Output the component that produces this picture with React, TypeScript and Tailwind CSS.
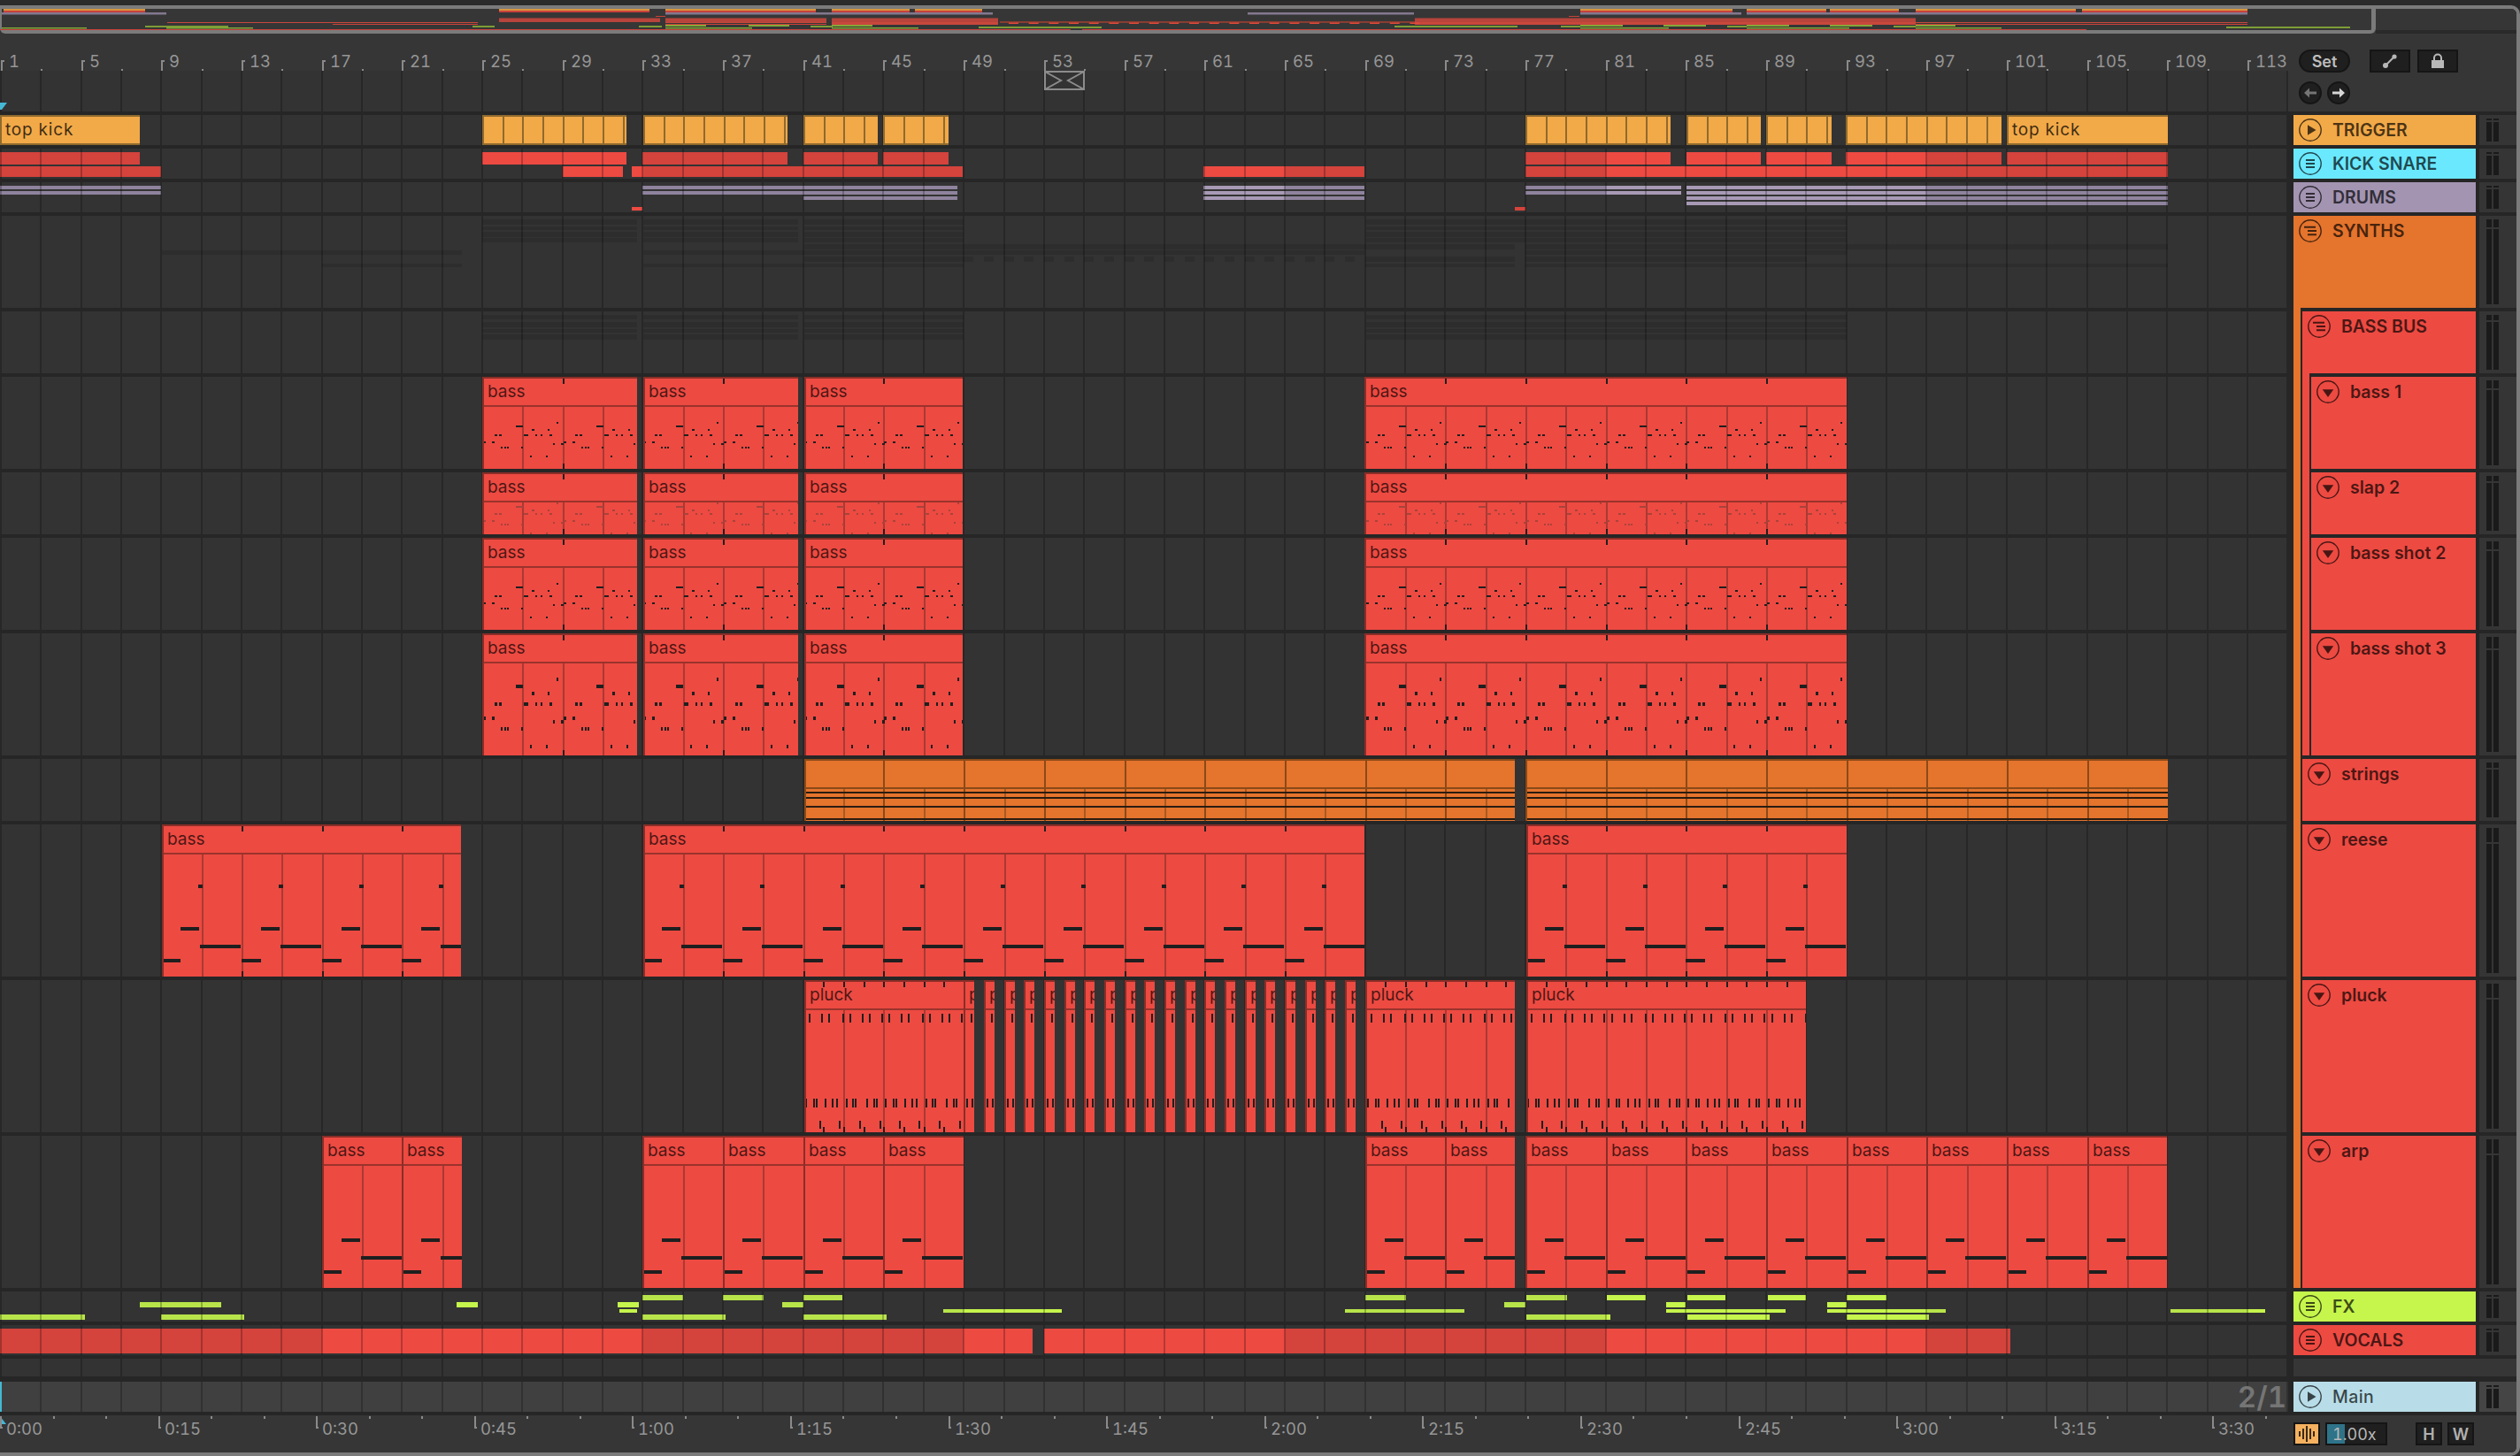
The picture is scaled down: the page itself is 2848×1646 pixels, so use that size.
import type { ReactNode } from "react";

// 一个小节 22.67px，所有片段都用画布上的像素坐标描述
const BAR = 22.67;
const barX = (bar: number) => Math.round(1 + (bar - 1) * BAR);

type Span = [number, number];

const RED = "#ed4a42";
const RED_DIM = "#d4433c";

const TRIGGER: Span[] = [
  [545, 708],
  [727, 890],
  [908, 992],
  [998, 1072],
  [1724, 1888],
  [1906, 1990],
  [1996, 2070],
  [2086, 2262],
];
const BASS: Span[] = [
  [545, 720],
  [727, 902],
  [909, 1088],
  [1542, 2087],
];
const REESE: Span[] = [
  [183, 521],
  [727, 1542],
  [1725, 2087],
];
const ARP_STARTS = [17, 21, 33, 37, 41, 45, 69, 73, 77, 81, 85, 89, 93, 97, 101, 105];
const PLUCK_SHORT = Array.from({ length: 20 }, (_, i) => 49 + i);
const SECOND_LABELS = Array.from({ length: 15 }, (_, i) => i);
const BAR_LABELS = Array.from({ length: 29 }, (_, i) => 1 + i * 4);

// bass 预览音符: [偏移, 宽度, 音高序号]，每 4 小节循环一次
const BASS_NOTES: Array<[number, number, number]> = [
  [37.5, 8, 1],
  [14, 3, 3],
  [18.5, 3, 3],
  [1, 3, 4],
  [11, 3, 4],
  [21, 2, 6],
  [24.5, 2, 6],
  [28, 2, 6],
  [43.5, 2, 6],
  [84, 2, 0],
  [56, 3, 2],
  [74, 2, 2],
  [47, 3, 3],
  [50, 2, 3],
  [60, 2, 3],
  [65.5, 2, 3],
  [76, 3, 3],
  [80, 2, 5],
  [89, 3, 5],
  [54, 2, 7],
  [72, 2, 7],
];
const PLUCK_TOP = [6, 20, 28, 44, 52, 66, 74, 88];
const PLUCK_MID = [2, 10.7, 14.3, 24, 31.7, 36.6, 48.2, 55.4, 58, 70.5, 78.6, 82];
const PLUCK_LOW = [18.3, 40.2, 62.5, 86.2];

type Rect = [number, number, number, number, string];

function overviewRects(): Rect[] {
  const rects: Rect[] = [];
  const add = (spans: Span[], y0: number, y1: number, color: string) =>
    spans.forEach(([a, b]) => rects.push([a, b, y0, y1, color]));

  const trig: Span[] = [
    [4, 164],
    [564, 734],
    [752, 922],
    [940, 1028],
    [1034, 1110],
    [1786, 1958],
    [1974, 2064],
    [2068, 2146],
    [2165, 2346],
    [2353, 2540],
  ];
  add(trig, 10, 12, "#d9953f");
  add(trig, 12, 14, "#c9423b");
  add([[2, 188], [752, 940], [940, 1122], [1410, 1598], [1786, 1968], [1974, 2540]], 14, 16.5, "#83788f");
  add([[741, 752], [1773, 1785]], 18, 19, "#c9423b");
  add([[564, 746], [752, 934], [940, 1128], [1599, 1786], [1786, 2165]], 20.5, 25, "#b8443c");
  add([[940, 1128], [1599, 1786], [1786, 2165]], 25, 28, "#c9473d");
  add([[189, 540], [752, 934], [2165, 2540]], 25, 26, "#c9473d");
  add([[376, 540], [752, 934], [2165, 2540]], 27, 28, "#c9423b");
  add([[1130, 1599]], 24.5, 25.5, "#d9442f");
  for (let x = 1140; x < 1599; x += 22.67) rects.push([x, x + 11, 25.5, 27, "#e04a38"]);
  add([[2, 98], [188, 286], [752, 850], [940, 1038], [1786, 1886], [1974, 2090], [2165, 2262]], 31, 32.5, "#84a838");
  add([[164, 258], [534, 559], [722, 748], [916, 941], [1576, 1715], [1764, 1786], [1952, 1974], [2140, 2165]], 29, 31, "#7d9d35");
  add([[752, 798], [846, 892], [940, 986], [1786, 1834], [1880, 1928], [1974, 2022], [2068, 2116], [2165, 2210]], 28, 30, "#84a838");
  add([[1106, 1245], [2516, 2656]], 30, 32, "#7d9d35");
  add([[0, 1210], [1223, 2358]], 33, 34, "#c9423b");
  return rects;
}

function GridOverlay() {
  return (
    <div className="pointer-events-none absolute inset-0 bg-[repeating-linear-gradient(90deg,rgba(0,0,0,0.24)_0,rgba(0,0,0,0.24)_2px,transparent_2px,transparent_45.34px)]" />
  );
}

// 按 16 小节交替明暗的色块（kick / drums / fx / vocals 这些折叠轨道）
function Slab({
  span,
  top,
  height,
  bright,
  dim,
}: {
  span: Span;
  top: number;
  height: number;
  bright: string;
  dim: string;
}) {
  const pieces: Array<{ a: number; b: number; on: boolean }> = [];
  for (let k = 0; k < 8; k++) {
    const a = Math.max(span[0], k === 0 ? 0 : barX(1 + k * 16));
    const b = Math.min(span[1], barX(1 + (k + 1) * 16));
    if (b > a) pieces.push({ a, b, on: k % 2 === 1 });
  }
  return (
    <>
      {pieces.map((p) => (
        <div
          key={p.a}
          className="absolute"
          style={{ left: p.a, width: p.b - p.a, top, height, background: p.on ? bright : dim }}
        />
      ))}
    </>
  );
}

function Ghost({ spans, top, height }: { spans: Span[]; top: number; height: number }) {
  return (
    <>
      {spans.map(([a, b]) => (
        <div key={a} className="absolute bg-[#2d2d2d]" style={{ left: a, width: b - a, top, height }} />
      ))}
    </>
  );
}

function TriggerClip({ span, label }: { span: Span; label?: string }) {
  return (
    <div
      className={`absolute inset-y-0 overflow-hidden border-y-2 border-l-2 border-[#8f6a2e] bg-[#f2a948] text-[19px] leading-[30px] tracking-[0.8px] text-black/75 ${
        label
          ? ""
          : "bg-[repeating-linear-gradient(90deg,transparent_0,transparent_20.67px,#8f6a2e_20.67px,#8f6a2e_22.67px)]"
      }`}
      style={{ left: span[0], width: span[1] - span[0] }}
    >
      {label ? <span className="pl-[4px]">{label}</span> : null}
    </div>
  );
}

function notesInRange(x0: number, x1: number, dxs: number[], y: number, h: number, w = 2): Rect[] {
  const rects: Rect[] = [];
  for (let bar = 1; bar < 120; bar += 4) {
    const origin = barX(bar);
    if (origin > x1) break;
    dxs.forEach((dx) => {
      const x = origin + dx;
      if (x >= x0 && x < x1) rects.push([x - x0, x - x0 + w, y, y + h, "#1f1f1f"]);
    });
  }
  return rects;
}

function patternInRange(x0: number, x1: number, notes: Array<[number, number, number, number]>): Rect[] {
  const rects: Rect[] = [];
  for (let bar = 1; bar < 120; bar += 4) {
    const origin = barX(bar);
    if (origin > x1) break;
    notes.forEach(([dx, w, y, h]) => {
      const x = origin + dx;
      if (x + w > x0 && x < x1) rects.push([Math.max(0, x - x0), Math.min(x1, x + w) - x0, y, y + h, "#1f1f1f"]);
    });
  }
  return rects;
}

function MidiClip({
  span,
  height,
  label,
  notes,
  tickStep = 4,
  lines = true,
  variant = "red",
}: {
  span: Span;
  height: number;
  label?: string;
  notes: Rect[];
  tickStep?: number;
  lines?: boolean;
  variant?: "red" | "orange";
}) {
  const [x0, x1] = span;
  const w = x1 - x0;
  const gridRects: Rect[] = [];
  if (lines) {
    for (let bar = 1; bar <= 113; bar += 2) {
      const x = barX(bar);
      if (x > x0 + 3 && x < x1 - 1) {
        const strong = variant === "orange" && (bar - 1) % 4 === 0;
        gridRects.push([
          x - x0,
          x - x0 + 2,
          strong ? 2 : 34,
          height,
          variant === "orange" ? (strong ? "#8a4a18" : "#a85a22") : "#a93a33",
        ]);
      }
    }
  }
  if (tickStep) {
    for (let bar = 1; bar <= 113; bar += tickStep) {
      const x = barX(bar);
      if (x > x0 + 3 && x < x1 - 1) {
        gridRects.push([x - x0, x - x0 + 2, 2, 8, "#1f1f1f"]);
        gridRects.push([x - x0, x - x0 + 2, height - 6, height, "#1f1f1f"]);
      }
    }
  }
  return (
    <div
      className={`absolute inset-y-0 overflow-hidden border-t-2 border-l-2 ${
        variant === "orange" ? "border-[#8a4a18] bg-[#e5742d]" : "border-[#8a2e28] bg-[#ed4a42]"
      }`}
      style={{ left: x0, width: w }}
    >
      <div className="h-[30px] whitespace-nowrap pl-[4px] text-[19px] leading-[29px] text-black/70">{label}</div>
      <div className={`h-[2px] ${variant === "orange" ? "bg-[#8a4a18]" : "bg-[#9a332c]"}`} />
      <svg
        className="absolute -left-[2px] -top-[2px]"
        width={w}
        height={height}
        shapeRendering="crispEdges"
      >
        {gridRects.concat(notes).map(([a, b, y0, y1, fill], i) => (
          <rect key={i} x={a} y={y0} width={b - a} height={y1 - y0} fill={fill} />
        ))}
      </svg>
    </div>
  );
}

function TrackIcon({ kind }: { kind: "play" | "menu" | "stagger" | "down" }) {
  return (
    <svg width="26" height="26" viewBox="0 0 26 26" className="shrink-0">
      <circle cx="13" cy="13" r="12.2" fill="none" stroke="currentColor" strokeWidth="1.4" />
      {kind === "play" ? <path d="M10 7.2 L19.5 13 L10 18.8 Z" fill="currentColor" /> : null}
      {kind === "down" ? <path d="M6.8 10.2 H19.2 L13 19 Z" fill="currentColor" /> : null}
      {kind === "menu" ? (
        <path d="M8 9 H18 M8 13 H18 M8 17 H18" stroke="currentColor" strokeWidth="1.9" fill="none" />
      ) : null}
      {kind === "stagger" ? (
        <path d="M6 8.8 H19 M10 13 H20 M10 17.2 H20" stroke="currentColor" strokeWidth="1.9" fill="none" />
      ) : null}
    </svg>
  );
}

function Meter({ main = false }: { main?: boolean }) {
  return (
    <div className={`flex h-[calc(100%-4px)] w-[42px] shrink-0 gap-[2px] py-[4px] pl-[8px] ${main ? "bg-[#454545]" : "bg-[#353535]"}`}>
      {[0, 1].map((i) => (
        <div key={i} className="flex h-full w-[6px] flex-col gap-[2px]">
          <div className="flex-[1] bg-[#1a1a1a]" />
          <div className="flex-[9] bg-[#1a1a1a]" />
        </div>
      ))}
    </div>
  );
}

function Track({
  rowClass,
  laneClass = "bg-[#333333]",
  name,
  icon,
  colorClass,
  textClass = "font-semibold",
  group = 0,
  inBus = false,
  busEnd = false,
  groupEnd = false,
  sepStrip,
  main = false,
  children,
}: {
  rowClass: string;
  laneClass?: string;
  name: string;
  icon: "play" | "menu" | "stagger" | "down";
  colorClass: string;
  textClass?: string;
  group?: number;
  inBus?: boolean;
  busEnd?: boolean;
  groupEnd?: boolean;
  sepStrip?: string;
  main?: boolean;
  children?: ReactNode;
}) {
  return (
    <div className={`flex shrink-0 bg-[#262626] ${rowClass}`}>
      <div className={`relative h-[calc(100%-4px)] w-[2586px] shrink-0 overflow-hidden ${laneClass}`}>{children}</div>
      <div className="w-[6px] shrink-0" />
      <div className="flex h-full w-[206px] shrink-0">
        {group ? (
          <>
            <div className={`w-[8px] bg-[#e5742d] ${groupEnd ? "h-[calc(100%-4px)]" : "h-full"}`} />
            <div className="w-[2px]" />
          </>
        ) : null}
        {inBus ? (
          <>
            <div className={`w-[8px] bg-[#ed4a42] ${busEnd ? "h-[calc(100%-4px)]" : "h-full"}`} />
            <div className="w-[2px]" />
          </>
        ) : null}
        <div className="flex min-w-0 flex-1 flex-col">
          <div
            className={`flex h-[calc(100%-4px)] items-start gap-[12px] pl-[6px] pt-[4px] text-[19.5px] leading-[26px] text-black/70 ${colorClass}`}
          >
            <TrackIcon kind={icon} />
            <span className={`whitespace-nowrap ${textClass}`}>{name}</span>
          </div>
          {sepStrip ? <div className={`h-[4px] w-[8px] ${sepStrip}`} /> : null}
        </div>
      </div>
      <div className="w-[4px] shrink-0" />
      <Meter main={main} />
    </div>
  );
}

function Overview() {
  const rects = overviewRects();
  return (
    <div className="flex h-[28px] shrink-0 bg-[#363636]">
      <div className="relative h-full w-[2685px] shrink-0 rounded-b-[6px] border-b-4 border-l-2 border-r-[5px] border-[#7b7b7b]">
        <svg className="absolute -left-[2px] top-0" width="2680" height="24">
          {rects.map(([a, b, y0, y1, fill], i) => (
            <rect key={i} x={a} y={y0 - 10} width={b - a} height={y1 - y0} fill={fill} />
          ))}
        </svg>
      </div>
      <div className="h-full flex-1 border-b-4 border-[#2a2a2a]" />
    </div>
  );
}

function SmallButton({ children }: { children: ReactNode }) {
  return (
    <div className="flex h-[26px] w-[46px] items-center justify-center border-2 border-[#151515] bg-[#1f1f1f] text-[#b8b8b8]">
      {children}
    </div>
  );
}

function Ruler() {
  const midTicks = Array.from({ length: 57 }, (_, i) => 1 + i * 2);
  return (
    <div className="flex h-[88px] shrink-0 bg-[#363636]">
      <div className="relative h-full w-[2586px] shrink-0">
        <div className="absolute inset-x-0 bottom-0 h-[46px] bg-[#333333]">
          <GridOverlay />
          <svg className="absolute bottom-0 left-0" width="16" height="10">
            <path d="M0 0 H8 L2 8 H0 Z" fill="#45b8d4" />
          </svg>
        </div>
        {midTicks.map((b) => (
          <div key={b} className="absolute top-[40px] h-[2px] w-[2px] bg-[#8a8a8a]" style={{ left: barX(b) }} />
        ))}
        {BAR_LABELS.map((b) => (
          <div key={b} className="absolute top-[22px] h-[20px]" style={{ left: barX(b) }}>
            <div className="absolute left-0 top-[8px] h-[12px] w-[2px] bg-[#8a8a8a]" />
            <div className="absolute left-0 top-[8px] h-[2px] w-[4px] bg-[#8a8a8a]" />
            <span className="absolute left-[9px] top-0 text-[18.5px] leading-[18px] tabular-nums text-[#969696]">{b}</span>
          </div>
        ))}
        {/* 循环括号标记 */}
        <svg className="absolute left-[1180px] top-[42px]" width="46" height="22" viewBox="0 0 46 22">
          <rect x="1" y="1" width="44" height="20" fill="#333333" stroke="#8c8c8c" strokeWidth="2" />
          <path d="M1 1 L19 11 L1 21 M45 1 L27 11 L45 21" fill="none" stroke="#8c8c8c" strokeWidth="2" />
        </svg>
      </div>
      <div className="flex flex-1 flex-col gap-[10px] pl-[12px] pt-[18px]">
        <div className="flex items-center">
          <div className="flex h-[26px] w-[58px] items-center justify-center rounded-full border-2 border-[#151515] bg-[#1f1f1f] text-[18px] font-semibold text-[#bdbdbd]">
            Set
          </div>
          <div className="ml-[22px] flex gap-[8px]">
            <SmallButton>
              <svg width="18" height="18" viewBox="0 0 18 18">
                <circle cx="4" cy="14" r="3" fill="currentColor" />
                <circle cx="14" cy="4" r="2.6" fill="currentColor" />
                <path d="M4 14 L14 4" stroke="currentColor" strokeWidth="2" />
              </svg>
            </SmallButton>
            <SmallButton>
              <svg width="16" height="18" viewBox="0 0 16 18">
                <rect x="1" y="8" width="14" height="9" fill="currentColor" />
                <path d="M4 8 V5.5 a4 4 0 0 1 8 0 V8" fill="none" stroke="currentColor" strokeWidth="2" />
              </svg>
            </SmallButton>
          </div>
        </div>
        <div className="flex gap-[6px]">
          <div className="flex h-[26px] w-[26px] items-center justify-center rounded-full border-2 border-[#151515] bg-[#1f1f1f]">
            <svg width="16" height="14" viewBox="0 0 16 14">
              <path d="M1 7 L7 1.5 V5.5 H15 V8.5 H7 V12.5 Z" fill="#757575" />
            </svg>
          </div>
          <div className="flex h-[26px] w-[26px] items-center justify-center rounded-full border-2 border-[#151515] bg-[#1f1f1f]">
            <svg width="16" height="14" viewBox="0 0 16 14">
              <path d="M15 7 L9 1.5 V5.5 H1 V8.5 H9 V12.5 Z" fill="#d6d6d6" />
            </svg>
          </div>
        </div>
      </div>
    </div>
  );
}

function BottomBar() {
  const minor = Array.from({ length: 44 }, (_, i) => i);
  return (
    <div className="flex h-[42px] shrink-0 bg-[#363636]">
      <div className="relative h-full w-[2592px] shrink-0">
        <svg className="absolute left-0 top-[1px]" width="10" height="10">
          <path d="M0 0 L7 9 H0 Z" fill="#45b8d4" />
        </svg>
        {minor.map((i) =>
          i % 3 === 0 ? null : (
            <div key={i} className="absolute top-[1px] h-[3px] w-[2px] bg-[#8a8a8a]" style={{ left: Math.round(i * 59.53) }} />
          ),
        )}
        {SECOND_LABELS.map((i) => {
          const total = i * 15;
          const text = `${Math.floor(total / 60)}:${String(total % 60).padStart(2, "0")}`;
          return (
            <div key={i} className="absolute top-0 h-full" style={{ left: Math.round(i * 178.6) }}>
              <div className="absolute left-0 top-[1px] h-[14px] w-[2px] bg-[#8a8a8a]" />
              <div className="absolute left-0 top-[13px] h-[2px] w-[3px] bg-[#8a8a8a]" />
              <span className="absolute left-[7px] top-[6px] text-[18.5px] leading-[18px] tabular-nums text-[#969696]">{text}</span>
            </div>
          );
        })}
      </div>
      <div className="flex flex-1 items-start pt-[8px]">
        <div className="flex h-[26px] w-[30px] items-center justify-center border-2 border-[#151515] bg-[#f5b15f]">
          <svg width="20" height="18" viewBox="0 0 20 18">
            <path d="M2 6 V12 M6 3 V15 M10 0 V18 M14 3 V15 M18 6 V12" stroke="#3a2a12" strokeWidth="2" />
          </svg>
        </div>
        <div className="ml-[6px] flex h-[26px] w-[70px] items-center border-2 border-[#151515] bg-[#1f1f1f] bg-[linear-gradient(90deg,#2f7389_0,#2f7389_20px,transparent_20px)] pl-[6px] text-[18px] tabular-nums text-[#b8b8b8]">
          1.00x
        </div>
        <div className="ml-[32px] flex h-[26px] w-[30px] items-center justify-center border-2 border-[#151515] bg-[#1f1f1f] text-[18px] font-semibold text-[#b0b0b0]">
          H
        </div>
        <div className="ml-[6px] flex h-[26px] w-[30px] items-center justify-center border-2 border-[#151515] bg-[#1f1f1f] text-[18px] font-semibold text-[#b0b0b0]">
          W
        </div>
      </div>
    </div>
  );
}

function bassNotes(pitches: number[], h: number, color = "#1f1f1f") {
  return (x0: number, x1: number): Rect[] =>
    patternInRange(
      x0,
      x1,
      BASS_NOTES.map(([dx, w, p]) => [dx, w, pitches[p], h]),
    ).map(([a, b, y0, y1]) => [a, b, y0, y1, color]);
}

const SLAP = bassNotes([34, 38, 42, 46, 54, 56, 58, 68], 2, "#a9433b");
const SHOT = bassNotes([51, 55, 59, 65, 73, 75, 79, 89], 2);
const SHOT3 = bassNotes([50, 58, 66, 78, 94, 98, 106, 126], 4);

const REESE_NOTES: Array<[number, number, number, number]> = [
  [41.5, 5, 68, 4],
  [22, 21, 116, 4],
  [44, 45.5, 136, 4],
  [0, 21.5, 152, 4],
];
const ARP_NOTES = REESE_NOTES.slice(1);

function stringNotes(x0: number, x1: number): Rect[] {
  return [37, 43, 53, 67].map((y) => [0, x1 - x0, y, y + 2, "#2a1c10"] as Rect);
}

function pluckNotes(x0: number, x1: number): Rect[] {
  return [
    ...notesInRange(x0, x1, PLUCK_TOP, 38, 10),
    ...notesInRange(x0, x1, PLUCK_MID, 134, 10),
    ...notesInRange(x0, x1, PLUCK_LOW, 159, 9),
  ];
}

const BUS_GHOST: Span[] = [
  [545, 720],
  [727, 902],
  [909, 1089],
  [1544, 2087],
];

export default function App() {
  const pluckDashes: Span[] = PLUCK_SHORT.map((b) => [barX(b), barX(b) + 11]);
  return (
    <div className="flex h-[1646px] w-[2848px] flex-col overflow-hidden bg-[#2b2b2b] pt-[6px] font-[family-name:Inter,sans-serif]">
      <div className="flex flex-1 flex-col overflow-hidden rounded-r-[10px] border-y-4 border-r-4 border-[#7b7b7b] bg-[#262626]">
        <Overview />
        <Ruler />
        <div className="h-[4px] shrink-0" />

        <Track rowClass="h-[38px]" name="TRIGGER" icon="play" colorClass="bg-[#f2a948]">
          <GridOverlay />
          <TriggerClip span={[0, 158]} label="top kick" />
          {TRIGGER.map((s) => (
            <TriggerClip key={s[0]} span={s} />
          ))}
          <TriggerClip span={[2268, 2450]} label="top kick" />
        </Track>

        <Track rowClass="h-[38px]" name="KICK SNARE" icon="menu" colorClass="bg-[#6ae8fe]">
          {([[0, 158], [545, 708], [726, 890], [908, 992], [998, 1072], [1724, 1888], [1906, 1990], [1996, 2070], [2086, 2262], [2268, 2450]] as Span[]).map((s) => (
            <Slab key={s[0]} span={s} top={4} height={14} bright={RED} dim={RED_DIM} />
          ))}
          {([[0, 182], [636, 704], [714, 1088], [1360, 1542], [1724, 2450]] as Span[]).map((s) => (
            <Slab key={s[0]} span={s} top={20} height={12} bright={RED} dim={RED_DIM} />
          ))}
          <GridOverlay />
        </Track>

        <Track rowClass="h-[38px]" name="DRUMS" icon="menu" colorClass="bg-[#a394b2]">
          {([[0, 182], [726, 1082], [1360, 1542], [1724, 1900], [1906, 2450]] as Span[]).map((s) => (
            <Slab key={s[0]} span={s} top={4} height={4} bright="#a89ab6" dim="#8f839e" />
          ))}
          {([[0, 182], [726, 1082], [1360, 1542], [1724, 1900], [1906, 2450]] as Span[]).map((s) => (
            <Slab key={s[0]} span={s} top={10} height={4} bright="#a89ab6" dim="#8f839e" />
          ))}
          {([[908, 1082], [1360, 1542], [1906, 2450]] as Span[]).map((s) => (
            <Slab key={s[0]} span={s} top={16} height={4} bright="#a89ab6" dim="#8f839e" />
          ))}
          <Slab span={[1906, 2450]} top={22} height={4} bright="#a89ab6" dim="#8f839e" />
          <Slab span={[714, 726]} top={28} height={4} bright={RED} dim={RED_DIM} />
          <Slab span={[1712, 1724]} top={28} height={4} bright={RED} dim={RED_DIM} />
          <GridOverlay />
        </Track>

        <Track rowClass="h-[108px]" name="SYNTHS" icon="stagger" colorClass="bg-[#e5742d]" sepStrip="bg-[#e5742d]">
          <Ghost spans={BUS_GHOST} top={4} height={6} />
          <Ghost spans={BUS_GHOST} top={12} height={4} />
          <Ghost spans={BUS_GHOST} top={18} height={6} />
          <Ghost spans={BUS_GHOST} top={25} height={5} />
          <Ghost spans={[[909, 1712], [1724, 2450]]} top={32} height={6} />
          <Ghost spans={[[183, 522], [727, 1542], [1724, 2087]]} top={39} height={5} />
          <Ghost spans={[[909, 1089], ...pluckDashes, [1543, 1712], [1724, 2042]]} top={46} height={6} />
          <Ghost spans={[[364, 522], [727, 1089], [1543, 1712], [1724, 2450]]} top={54} height={4} />
          <GridOverlay />
        </Track>

        <Track rowClass="h-[74px]" name="BASS BUS" icon="stagger" colorClass="bg-[#ed4a42]" group={1} sepStrip="bg-[#ed4a42]">
          <Ghost spans={BUS_GHOST} top={4} height={5} />
          <Ghost spans={BUS_GHOST} top={12} height={6} />
          <Ghost spans={BUS_GHOST} top={20} height={4} />
          <Ghost spans={BUS_GHOST} top={26} height={6} />
          <GridOverlay />
        </Track>

        <Track rowClass="h-[108px]" name="bass 1" icon="down" colorClass="bg-[#ed4a42]" group={1} inBus>
          <GridOverlay />
          {BASS.map((s) => (
            <MidiClip key={s[0]} span={s} height={104} label="bass" notes={SHOT(s[0], s[1])} />
          ))}
        </Track>

        <Track rowClass="h-[74px]" name="slap 2" icon="down" colorClass="bg-[#ed4a42]" group={1} inBus>
          <GridOverlay />
          {BASS.map((s) => (
            <MidiClip key={s[0]} span={s} height={70} label="bass" notes={SLAP(s[0], s[1])} />
          ))}
        </Track>

        <Track rowClass="h-[108px]" name="bass shot 2" icon="down" colorClass="bg-[#ed4a42]" group={1} inBus>
          <GridOverlay />
          {BASS.map((s) => (
            <MidiClip key={s[0]} span={s} height={104} label="bass" notes={SHOT(s[0], s[1])} />
          ))}
        </Track>

        <Track rowClass="h-[142px]" name="bass shot 3" icon="down" colorClass="bg-[#ed4a42]" group={1} inBus busEnd>
          <GridOverlay />
          {BASS.map((s) => (
            <MidiClip key={s[0]} span={s} height={138} label="bass" notes={SHOT3(s[0], s[1])} />
          ))}
        </Track>

        <Track rowClass="h-[74px]" name="strings" icon="down" colorClass="bg-[#ed4a42]" group={1}>
          <GridOverlay />
          {([[909, 1712], [1724, 2450]] as Span[]).map((s) => (
            <MidiClip key={s[0]} span={s} height={70} variant="orange" tickStep={0} notes={stringNotes(s[0], s[1])} />
          ))}
        </Track>

        <Track rowClass="h-[176px]" name="reese" icon="down" colorClass="bg-[#ed4a42]" group={1}>
          <GridOverlay />
          {REESE.map((s) => (
            <MidiClip key={s[0]} span={s} height={172} label="bass" notes={patternInRange(s[0], s[1], REESE_NOTES)} />
          ))}
        </Track>

        <Track rowClass="h-[176px]" name="pluck" icon="down" colorClass="bg-[#ed4a42]" group={1}>
          <GridOverlay />
          <MidiClip span={[909, 1089]} height={172} label="pluck" tickStep={1} notes={pluckNotes(909, 1089)} />
          {PLUCK_SHORT.map((b) => (
            <MidiClip
              key={b}
              span={[barX(b), barX(b) + 12]}
              height={172}
              label="p"
              tickStep={0}
              lines={false}
              notes={[
                [8, 10, 38, 48, "#1f1f1f"],
                [3, 5, 134, 144, "#1f1f1f"],
                [9, 11, 134, 144, "#1f1f1f"],
              ]}
            />
          ))}
          <MidiClip span={[1543, 1712]} height={172} label="pluck" tickStep={1} notes={pluckNotes(1543, 1712)} />
          <MidiClip span={[1725, 2041]} height={172} label="pluck" tickStep={1} notes={pluckNotes(1725, 2041)} />
        </Track>

        <Track rowClass="h-[176px]" name="arp" icon="down" colorClass="bg-[#ed4a42]" group={1} groupEnd>
          <GridOverlay />
          {ARP_STARTS.map((b) => {
            const end = b === 21 ? 522 : b === 73 ? 1712 : barX(b + 4);
            return (
              <MidiClip
                key={b}
                span={[barX(b), end]}
                height={172}
                label="bass"
                tickStep={0}
                notes={patternInRange(barX(b), end, ARP_NOTES)}
              />
            );
          })}
        </Track>

        <Track rowClass="h-[38px]" name="FX" icon="menu" colorClass="bg-[#c6f54c]">
          {([[726, 772], [817, 863], [908, 952], [1543, 1589], [1725, 1771], [1816, 1860], [1907, 1950], [1998, 2041], [2087, 2132]] as Span[]).map((s) => (
            <Slab key={s[0]} span={s} top={4} height={6} bright="#c6f54c" dim="#b8e44a" />
          ))}
          {([[158, 250], [516, 540], [698, 722], [884, 908], [1700, 1724], [1883, 1905], [2065, 2087]] as Span[]).map((s) => (
            <Slab key={s[0]} span={s} top={12} height={6} bright="#c6f54c" dim="#b8e44a" />
          ))}
          {([[700, 720], [1066, 1200], [1520, 1655], [1883, 2018], [2065, 2199], [2453, 2560]] as Span[]).map((s) => (
            <Slab key={s[0]} span={s} top={20} height={4} bright="#c6f54c" dim="#b8e44a" />
          ))}
          {([[0, 96], [182, 276], [726, 820], [908, 1002], [1725, 1820], [1907, 2000], [2087, 2180]] as Span[]).map((s) => (
            <Slab key={s[0]} span={s} top={26} height={6} bright="#c6f54c" dim="#b8e44a" />
          ))}
          <GridOverlay />
        </Track>

        <Track rowClass="h-[38px]" name="VOCALS" icon="menu" colorClass="bg-[#ed4a42]">
          <Slab span={[0, 1167]} top={4} height={28} bright={RED} dim={RED_DIM} />
          <Slab span={[1180, 2272]} top={4} height={28} bright={RED} dim={RED_DIM} />
          <GridOverlay />
        </Track>

        <div className="flex h-[26px] shrink-0">
          <div className="relative h-[20px] w-[2586px] shrink-0 bg-[#333333]">
            <GridOverlay />
          </div>
          <div className="w-[6px] shrink-0" />
          <div className="h-[20px] flex-1 bg-[#363636]" />
        </div>

        <Track rowClass="h-[38px]" laneClass="bg-[#404040]" name="Main" icon="play" colorClass="bg-[#b8dde8]" textClass="font-medium tracking-[0.4px]" main>
          <GridOverlay />
          <div className="absolute inset-y-0 left-0 w-[2px] bg-[#45b8d4]" />
          <span className="absolute right-[2px] top-0 text-[33px] font-semibold leading-[34px] tabular-nums text-[#757575]">2/1</span>
        </Track>

        <BottomBar />
      </div>
    </div>
  );
}
